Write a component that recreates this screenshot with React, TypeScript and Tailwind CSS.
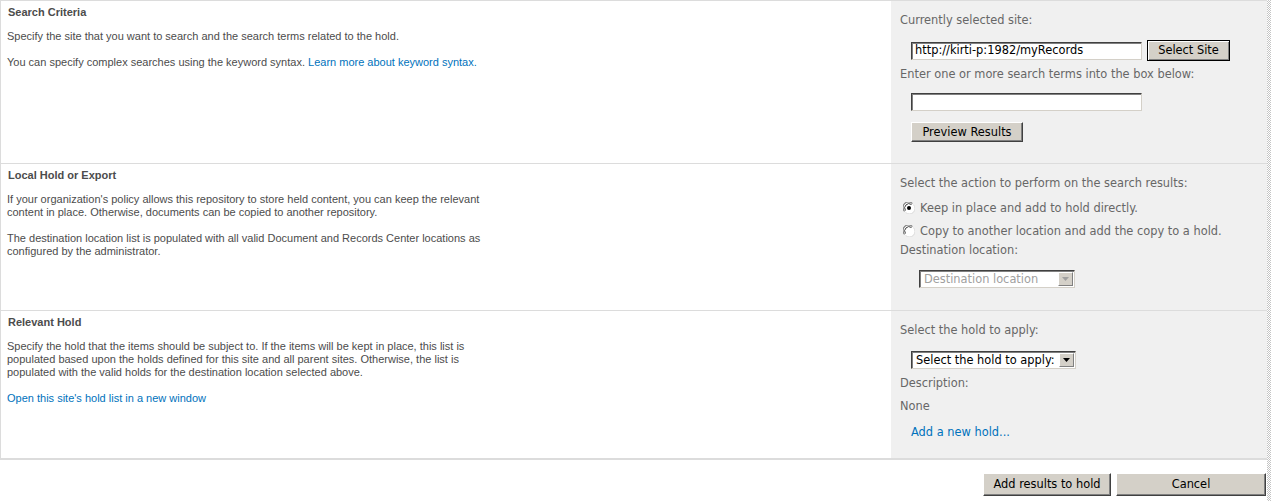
import React from "react";

const LEFT = "font-['Liberation_Sans',Arial,sans-serif] text-[11px] leading-[13px] text-[#4c4c4c]";
const RIGHT = "font-['DejaVu_Sans',Verdana,sans-serif] text-[11.4px] leading-[13px] text-[#676767]";
const LINK = "text-[#0072bc]";

function Btn({ children, className = "", def = false }: { children: React.ReactNode; className?: string; def?: boolean }) {
  return (
    <div
      className={
        "flex items-center justify-center bg-[#d4d0c8] text-black font-['DejaVu_Sans',Verdana,sans-serif] text-[11.4px] leading-[13px] " +
        (def
          ? "border border-black shadow-[inset_1px_1px_0_#ffffff,inset_-1px_-1px_0_#808080] "
          : "border border-t-white border-l-white border-r-[#404040] border-b-[#404040] shadow-[inset_-1px_-1px_0_#808080] ") +
        className
      }
    >
      {children}
    </div>
  );
}

function TextBox({ value = "", className = "" }: { value?: string; className?: string }) {
  return (
    <div
      className={
        "bg-white border border-t-[#404040] border-l-[#404040] border-r-[#d4d0c8] border-b-[#d4d0c8] shadow-[inset_1px_1px_0_#808080] flex items-center pl-[3px] text-black font-['DejaVu_Sans',Verdana,sans-serif] text-[11.4px] leading-[13px] " +
        className
      }
    >
      {value}
    </div>
  );
}

function Arrow({ disabled }: { disabled?: boolean }) {
  return (
    <div className="w-[15px] h-full bg-[#d4d0c8] border border-t-white border-l-white border-r-[#808080] border-b-[#808080] flex items-center justify-center">
      <svg width="7" height="4" viewBox="0 0 7 4">
        <path d="M0 0h7L3.5 4z" fill={disabled ? "#a0a0a0" : "#000"} />
      </svg>
    </div>
  );
}

function Select({ text, disabled, className = "" }: { text: string; disabled?: boolean; className?: string }) {
  return (
    <div
      className={
        "bg-white border border-t-[#404040] border-l-[#404040] border-r-[#d4d0c8] border-b-[#d4d0c8] shadow-[inset_1px_1px_0_#808080] flex items-stretch p-[1px] font-['DejaVu_Sans',Verdana,sans-serif] text-[11.4px] leading-[13px] " +
        className
      }
    >
      <div className={"flex-1 flex items-center pl-[3px] whitespace-nowrap overflow-hidden " + (disabled ? "text-[#a0a0a0]" : "text-black")}>{text}</div>
      <Arrow disabled={disabled} />
    </div>
  );
}

function Radio({ checked }: { checked?: boolean }) {
  return (
    <svg width="12" height="12" viewBox="0 0 12 12" className="shrink-0">
      <circle cx="6" cy="6" r="5.5" fill="#ffffff" />
      <path d="M1.6 9.4A5.5 5.5 0 0 1 9.4 1.6" stroke="#808080" strokeWidth="1.2" fill="none" />
      <path d="M2.5 8.5A4.3 4.3 0 0 1 8.5 2.5" stroke="#404040" strokeWidth="1" fill="none" />
      <path d="M10.4 2.6A5.5 5.5 0 0 1 2.6 10.4" stroke="#dcdcdc" strokeWidth="1" fill="none" />
      {checked && <circle cx="6" cy="6" r="2" fill="#000" />}
    </svg>
  );
}

export default function App() {
  return (
    <div className="w-[1271px] h-[501px] flex bg-white overflow-hidden">
      <div className="w-[1267px] flex flex-col">
        {/* Row 1 */}
        <section className="flex h-[163px] border-t border-[#dcdcdc]">
          <div className={"w-[891px] border-l border-[#dcdcdc] pl-[6px] pt-[5px] " + LEFT}>
            <div className="font-bold pl-[1px]">Search Criteria</div>
            <p className="mt-[11px] whitespace-nowrap">Specify the site that you want to search and the search terms related to the hold.</p>
            <p className="mt-[13px] whitespace-nowrap">
              You can specify complex searches using the keyword syntax. <span className={LINK}>Learn more about keyword syntax.</span>
            </p>
          </div>
          <div className={"flex-1 bg-[#f0f0f0] pl-[9px] pt-[13px] " + RIGHT}>
            <div>Currently selected site:</div>
            <div className="flex items-center gap-[5px] mt-[13px] pl-[11px]">
              <TextBox value="http://kirti-p:1982/myRecords" className="w-[231px] h-[18px]" />
              <Btn def className="w-[83px] h-[21px]">Select Site</Btn>
            </div>
            <div className="mt-[7px]">Enter one or more search terms into the box below:</div>
            <div className="mt-[12px] pl-[11px]">
              <TextBox className="w-[231px] h-[18px]" />
            </div>
            <div className="mt-[11px] pl-[11px]">
              <Btn className="w-[112px] h-[20px]">Preview Results</Btn>
            </div>
          </div>
        </section>

        {/* Row 2 */}
        <section className="flex h-[147px] border-t border-[#dcdcdc]">
          <div className={"w-[891px] border-l border-[#dcdcdc] pl-[6px] pt-[5px] " + LEFT}>
            <div className="font-bold pl-[1px]">Local Hold or Export</div>
            <p className="mt-[11px] whitespace-nowrap">
              If your organization's policy allows this repository to store held content, you can keep the relevant
              <br />
              content in place. Otherwise, documents can be copied to another repository.
            </p>
            <p className="mt-[13px] whitespace-nowrap">
              The destination location list is populated with all valid Document and Records Center locations as
              <br />
              configured by the administrator.
            </p>
          </div>
          <div className={"flex-1 bg-[#f0f0f0] pl-[9px] pt-[13px] " + RIGHT}>
            <div>Select the action to perform on the search results:</div>
            <div className="flex items-center gap-[5px] mt-[10px] h-[16px] pl-[3px]">
              <Radio checked />
              <span>Keep in place and add to hold directly.</span>
            </div>
            <div className="flex items-center gap-[5px] mt-[7px] h-[16px] pl-[3px]">
              <Radio />
              <span>Copy to another location and add the copy to a hold.</span>
            </div>
            <div className="mt-[5px]">Destination location:</div>
            <div className="mt-[13px] pl-[19px]">
              <Select text="Destination location" disabled className="w-[156px] h-[18px]" />
            </div>
          </div>
        </section>

        {/* Row 3 */}
        <section className="flex h-[150px] border-t border-b-2 border-[#dcdcdc]">
          <div className={"w-[891px] border-l border-[#dcdcdc] pl-[6px] pt-[5px] " + LEFT}>
            <div className="font-bold pl-[1px]">Relevant Hold</div>
            <p className="mt-[11px] whitespace-nowrap">
              Specify the hold that the items should be subject to. If the items will be kept in place, this list is
              <br />
              populated based upon the holds defined for this site and all parent sites. Otherwise, the list is
              <br />
              populated with the valid holds for the destination location selected above.
            </p>
            <p className={"mt-[13px] whitespace-nowrap " + LINK}>Open this site's hold list in a new window</p>
          </div>
          <div className={"flex-1 bg-[#f0f0f0] pl-[9px] pt-[13px] " + RIGHT}>
            <div>Select the hold to apply:</div>
            <div className="mt-[14px] pl-[11px]">
              <Select text="Select the hold to apply:" className="w-[165px] h-[18px]" />
            </div>
            <div className="mt-[8px]">Description:</div>
            <div className="mt-[10px]">None</div>
            <div className={"mt-[13px] pl-[11px] " + LINK}>Add a new hold...</div>
          </div>
        </section>

        {/* Buttons */}
        <div className="flex justify-end gap-[5px] pt-[13px] pr-[1px]">
          <Btn className="w-[128px] h-[23px]">Add results to hold</Btn>
          <Btn className="w-[150px] h-[23px]">Cancel</Btn>
        </div>
      </div>
      <div className="w-[4px] h-full bg-[repeating-conic-gradient(#c4c4c4_0%_25%,#ffffff_0%_50%)] bg-[length:2px_2px]" />
    </div>
  );
}
